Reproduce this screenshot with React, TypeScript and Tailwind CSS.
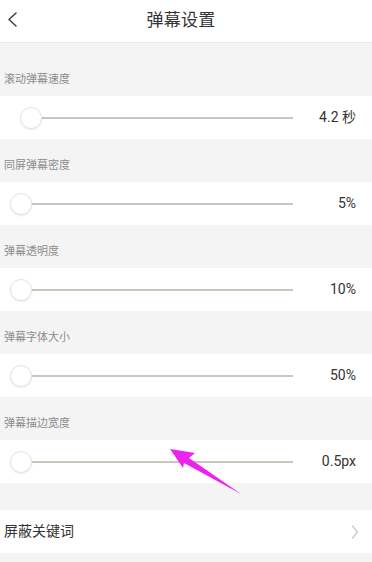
type SliderRowProps = {
  label: string;
  value: string;
  offset: number;
  first?: boolean;
};

const SliderRow = ({ label, value, offset, first = false }: SliderRowProps) => {
  return (
    <>
      <div
        className={`${first ? "h-[53px]" : "h-[43px]"} flex items-end pb-[8px] pl-[4px] text-[11px] leading-[16px] text-[#8c8c8c]`}
      >
        {label}
      </div>
      <div className="h-[43px] bg-white flex items-center">
        <div className="relative ml-[10px] w-[283px] h-full">
          <div
            className="absolute right-0 top-1/2 -translate-y-1/2 h-[2px] bg-[#c9c7bc]"
            style={{ left: offset + 11 }}
          />
          <div
            className="absolute top-1/2 -translate-y-1/2 w-[22px] h-[22px] rounded-full bg-white border border-[#e4e4e4] shadow-[0_1px_2px_rgba(0,0,0,0.08)]"
            style={{ left: offset }}
          />
        </div>
        <div className="flex-1 text-right pr-[16px] text-[14px] text-[#333]">
          {value}
        </div>
      </div>
    </>
  );
};

export default function App() {
  return (
    <div className="relative w-[372px] h-[562px] overflow-hidden bg-[#f4f4f4] font-['Roboto','Noto_Sans_CJK_SC',sans-serif]">
      <div className="h-[43px] bg-white border-b border-[#ececec] flex items-center">
        <div className="w-[20px] h-full flex items-center">
          <svg width="20" height="43" viewBox="0 0 20 43">
            <polyline
              points="16,13 9,19.5 16,26"
              fill="none"
              stroke="#444"
              strokeWidth="1.6"
              strokeLinecap="round"
              strokeLinejoin="round"
            />
          </svg>
        </div>
        <div className="flex-1 text-center text-[17px] text-[#333] tracking-[0.3px]">
          弹幕设置
        </div>
        <div className="w-[30px]" />
      </div>

      <SliderRow label="滚动弹幕速度" value="4.2 秒" offset={10} first />
      <SliderRow label="同屏弹幕密度" value="5%" offset={0} />
      <SliderRow label="弹幕透明度" value="10%" offset={0} />
      <SliderRow label="弹幕字体大小" value="50%" offset={0} />
      <SliderRow label="弹幕描边宽度" value="0.5px" offset={0} />

      <div className="h-[27px]" />
      <div className="h-[43px] bg-white flex items-center justify-between pl-[4px] pr-[13px]">
        <span className="text-[14px] text-[#333]">屏蔽关键词</span>
        <svg width="8" height="14" viewBox="0 0 8 14">
          <polyline
            points="1.5,1 6.5,7 1.5,13"
            fill="none"
            stroke="#cacaca"
            strokeWidth="1.3"
            strokeLinecap="round"
            strokeLinejoin="round"
          />
        </svg>
      </div>

      <svg
        className="absolute left-0 top-0 pointer-events-none"
        width="372"
        height="562"
        viewBox="0 0 372 562"
      >
        <polygon
          points="170,449 195,453 189,458 241,494 184,463 183,468"
          fill="#ee22ee"
        />
      </svg>
    </div>
  );
}
